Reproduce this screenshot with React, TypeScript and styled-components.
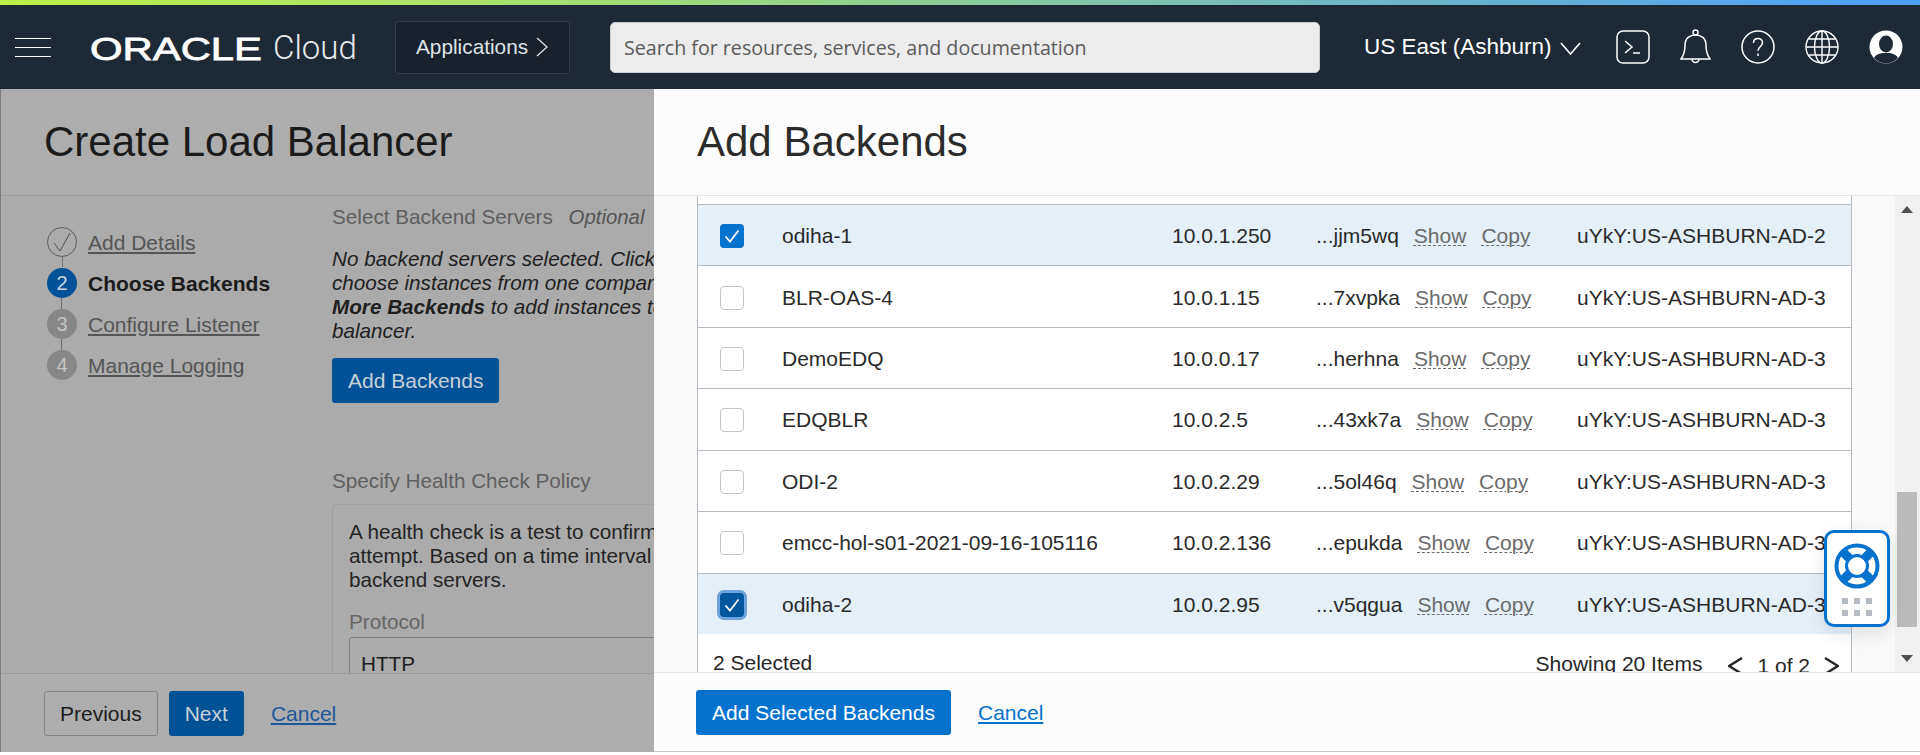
import React from 'react';
import styled, {createGlobalStyle} from 'styled-components';

const GlobalStyle = createGlobalStyle`
  html, body {
    margin: 0;
    padding: 0;
    height: 755px;
    overflow: hidden;
    background: #fff;
    font-family: "Liberation Sans", Arial, sans-serif;
    font-size: 21px;
  }
  * {
    box-sizing: border-box;
  }
`;

const Page = styled.div`
  display: flex;
  flex-direction: column;
  width: 1920px;
  height: 755px;
  overflow: hidden;
`;

const Strip = styled.div`
  height: 5px;
  flex: none;
  background: linear-gradient(90deg, #bdee47 0%, #9edc78 34%, #72bac0 68%, #4c9efc 100%);
`;

const Header = styled.header`
  height: 84px;
  flex: none;
  display: flex;
  align-items: center;
  padding-left: 15px;
  background: #1e2936;
  color: #fff;
`;

const Burger = styled.div`
  width: 36px;
  height: 19px;
  flex: none;
  margin-top: 1px;
  border-top: 1px solid #fff;
  border-bottom: 1px solid #fff;
  display: flex;
  align-items: center;
  &::before {
    content: '';
    width: 100%;
    height: 1px;
    background: #fff;
  }
`;

const Logo = styled.svg`
  width: 172px;
  height: 30px;
  margin-left: 39px;
  flex: none;
`;

const Cloud = styled.span`
  margin-left: 11px;
  width: 99px;
  flex: none;
  font-family: Roboto, "Liberation Sans", sans-serif;
  font-weight: 300;
  font-size: 33px;
  color: #e8eaec;
`;

const AppsButton = styled.div`
  width: 175px;
  height: 53px;
  flex: none;
  margin-left: 23px;
  padding-left: 20px;
  display: flex;
  align-items: center;
  gap: 8px;
  background: #19212c;
  border: 1px solid #333c48;
  border-radius: 3px;
  color: #dfe3e8;
  font-size: 20.8px;
`;

const Search = styled.div`
  width: 710px;
  height: 51px;
  flex: none;
  margin-left: 40px;
  padding-left: 13px;
  display: flex;
  align-items: center;
  background: #ececec;
  border-radius: 5px;
  border: 1px solid #c9ccd0;
  color: #5b5b5b;
  font-family: "Open Sans", sans-serif;
  font-size: 19.65px;
`;

const Region = styled.div`
  margin-left: 44px;
  display: flex;
  align-items: center;
  gap: 8px;
  width: 217px;
  flex: none;
  font-size: 22.5px;
  white-space: nowrap;
  & > svg {
    flex: none;
    margin-top: 2px;
  }
`;

const HeaderIcons = styled.div`
  display: flex;
  align-items: center;
  margin-left: 35px;
  gap: 30px;
`;

const Main = styled.div`
  flex: 1;
  display: flex;
  min-height: 0;
`;

const LeftPanel = styled.section`
  width: 654px;
  flex: none;
  display: flex;
  flex-direction: column;
  overflow: hidden;
  background: #ababab;
  border-left: 1px solid #7d7d7d;
  height: 663px;
`;

const Drawer = styled.section`
  flex: 1;
  display: flex;
  flex-direction: column;
  min-width: 0;
  background: #fcfcfc;
  height: 663px;
  border-bottom: 1px solid #c5c9ce;
  position: relative;
`;

const TitleBar = styled.div<{$dim?: boolean}>`
  height: 107px;
  flex: none;
  display: flex;
  align-items: center;
  padding-left: 43px;
  font-size: 42px;
  color: ${p => (p.$dim ? '#1b1b1b' : '#2b2b2b')};
  background: ${p => (p.$dim ? '#adadad' : '#fcfcfc')};
  border-bottom: 1px solid ${p => (p.$dim ? '#9c9c9c' : '#e5e5e5')};
`;

const LeftBody = styled.div`
  flex: 1;
  min-height: 0;
  display: flex;
  overflow: hidden;
`;

const StepList = styled.ol`
  width: 331px;
  flex: none;
  margin: 0;
  padding: 31px 0 0 46px;
  list-style: none;
  display: flex;
  flex-direction: column;
  gap: 11px;
`;

const Step = styled.li`
  display: flex;
  align-items: center;
  gap: 11px;
  height: 30px;
`;

const StepCircle = styled.span<{$kind: 'done' | 'active' | 'todo'; $last?: boolean}>`
  position: relative;
  width: 30px;
  height: 30px;
  flex: none;
  border-radius: 50%;
  display: flex;
  align-items: center;
  justify-content: center;
  font-size: 20px;
  color: ${p => (p.$kind === 'active' ? '#c9d5e0' : '#c4c4c4')};
  background: ${p => (p.$kind === 'active' ? '#005195' : p.$kind === 'todo' ? '#878787' : 'transparent')};
  border: ${p => (p.$kind === 'done' ? '1px solid #5c5c5c' : 'none')};
  &::after {
    content: '';
    display: ${p => (p.$last ? 'none' : 'block')};
    position: absolute;
    left: 14px;
    top: 100%;
    width: 1px;
    height: 11px;
    background: #6f6f6f;
  }
`;

const StepLink = styled.a`
  padding-top: 1px;
  color: #555;
  text-decoration: underline;
`;

const StepCurrent = styled.span`
  padding-top: 1px;
  color: #1b1b1b;
  font-weight: 700;
`;

const Form = styled.div`
  width: 1200px;
  flex: none;
  padding-top: 9px;
  line-height: 24px;
  font-size: 20.7px;
`;

const SectionLabel = styled.div`
  color: #5f5f5f;
  white-space: nowrap;
`;

const OptionalMark = styled.em`
  margin-left: 10px;
  color: #555;
  font-size: 20.4px;
`;

const HintText = styled.p`
  margin: 18px 0 15px;
  font-style: italic;
  color: #1f1f1f;
  white-space: pre-line;
`;

const Button = styled.button<{$tone: 'dim' | 'bright' | 'outline'}>`
  height: 45px;
  padding: 0 ${p => (p.$tone === 'outline' ? '15px' : '16px')};
  display: inline-flex;
  align-items: center;
  font: inherit;
  font-size: 21px;
  border-radius: 3px;
  border: ${p => (p.$tone === 'outline' ? '1px solid #838383' : 'none')};
  background: ${p => (p.$tone === 'dim' ? '#005195' : p.$tone === 'bright' ? '#0572ce' : 'transparent')};
  color: ${p => (p.$tone === 'dim' ? '#c7d1da' : p.$tone === 'bright' ? '#fff' : '#1d1d1d')};
`;

const HealthHeading = styled(SectionLabel)`
  margin-top: 66px;
`;

const HealthBox = styled.div`
  margin-top: 11px;
  height: 300px;
  padding: 15px 16px;
  border: 1px solid #a0a0a0;
  border-radius: 4px;
  color: #242424;
  white-space: pre-line;
`;

const FieldLabel = styled.div`
  margin-top: 18px;
  color: #666;
`;

const SelectBox = styled.div`
  margin-top: 3px;
  height: 60px;
  padding: 14px 11px;
  border: 1px solid #7f7f7f;
  border-radius: 3px;
  color: #1c1c1c;
`;

const FooterBar = styled.div<{$dim?: boolean}>`
  height: 79px;
  flex: none;
  display: flex;
  align-items: flex-start;
  gap: 11px;
  padding: 17px 0 0 ${p => (p.$dim ? '43px' : '42px')};
  background: ${p => (p.$dim ? '#adadad' : '#fcfcfc')};
  border-top: 1px solid ${p => (p.$dim ? '#9a9a9a' : '#e5e5e5')};
`;

const CancelLink = styled.a<{$dim?: boolean}>`
  height: 45px;
  margin-left: 16px;
  display: flex;
  align-items: center;
  text-decoration: underline;
  color: ${p => (p.$dim ? '#1d5797' : '#0572ce')};
`;

const DrawerBody = styled.div`
  flex: 1;
  min-height: 0;
  display: flex;
  background: #f9f9f9;
`;

const TableArea = styled.div`
  flex: 1;
  padding: 0 43px;
  min-width: 0;
  overflow: hidden;
`;

const Table = styled.div`
  background: #fff;
  height: 100%;
  padding-top: 8px;
  border-left: 1px solid #b5bcc4;
  border-right: 1px solid #b5bcc4;
`;

const Row = styled.div<{$selected?: boolean}>`
  height: 61.43px;
  padding-top: 2px;
  display: grid;
  grid-template-columns: 84px 390px 144px 261px 1fr;
  align-items: center;
  white-space: nowrap;
  color: #2a2a2a;
  background: ${p => (p.$selected ? '#e4eff8' : '#fff')};
  border-top: 1px solid #b5bcc4;
  &:last-of-type {
    border-bottom: 1px solid #b5bcc4;
  }
`;

const Check = styled.span<{$checked?: boolean; $focused?: boolean}>`
  width: 24px;
  height: 24px;
  margin-left: 22px;
  display: flex;
  align-items: center;
  justify-content: center;
  border-radius: 4px;
  border: ${p => (p.$checked ? 'none' : '1px solid #c2c6cb')};
  background: ${p => (p.$focused ? '#00569f' : p.$checked ? '#0572ce' : '#fff')};
  box-shadow: ${p => (p.$focused ? '0 0 0 3px #6ea3dc' : 'none')};
`;

const HashCell = styled.span`
  display: flex;
  gap: 15px;
`;

const DashedLink = styled.a`
  color: #6b6b6b;
  text-decoration: underline dashed 1px;
  text-underline-offset: 2px;
`;

const TableFoot = styled.div`
  display: flex;
  justify-content: space-between;
  padding: 17px 12px 0 15px;
  color: #262626;
  line-height: 24px;
  white-space: nowrap;
`;

const Pager = styled.div`
  display: flex;
  align-items: center;
  gap: 12px;
`;

const PagerCount = styled.span`
  margin: 3px 0 0 14px;
  display: flex;
  align-items: center;
  gap: 14px;
`;

const Scrollbar = styled.div`
  width: 25px;
  flex: none;
  padding: 0 3px 0 2px;
  display: flex;
  flex-direction: column;
  align-items: center;
  background: #f1f1f1;
`;

const ScrollArrow = styled.div<{$up?: boolean}>`
  width: 0;
  height: 0;
  flex: none;
  margin-top: ${p => (p.$up ? '10px' : '28px')};
  border-left: 6px solid transparent;
  border-right: 6px solid transparent;
  ${p => (p.$up ? 'border-bottom: 7px solid #505050;' : 'border-top: 7px solid #505050;')}
`;

const ScrollThumb = styled.div`
  width: 20px;
  height: 135px;
  flex: none;
  margin-top: 279px;
  background: #bbb;
`;

const HelpWidget = styled.div`
  position: absolute;
  left: 1170px;
  top: 441px;
  width: 66px;
  height: 97px;
  padding-top: 10px;
  display: flex;
  flex-direction: column;
  align-items: center;
  gap: 9px;
  background: #fff;
  border: 3px solid #0572ce;
  border-radius: 10px;
  box-shadow: 0 6px 18px rgba(0, 0, 0, 0.1);
`;

const DotGrid = styled.div`
  display: grid;
  grid-template-columns: repeat(3, 6px);
  gap: 6px;
`;

const Dot = styled.span`
  height: 6px;
  background: #b5bcc4;
`;

type ChevronProps = {dir: 'left' | 'right' | 'down'; w: number; h: number; color?: string; sw?: number};

const Chevron = ({dir, w, h, color = '#fff', sw = 1.6}: ChevronProps) => {
  const d =
    dir === 'left'
      ? `M${w - 1} 1 1 ${h / 2}l${w - 2} ${h / 2 - 1}`
      : dir === 'right'
        ? `M1 1l${w - 2} ${h / 2 - 1}L1 ${h - 1}`
        : `M1 1l${w / 2 - 1} ${h - 2}L${w - 1} 1`;
  return (
    <svg width={w} height={h} viewBox={`0 0 ${w} ${h}`} fill="none" stroke={color} strokeWidth={sw}>
      <path d={d} />
    </svg>
  );
};

const TerminalIcon = () => (
  <svg width="34" height="34" viewBox="0 0 34 34" fill="none" stroke="#fff" strokeWidth="1.5">
    <rect x="1" y="1" width="32" height="32" rx="6" />
    <path d="M9 11l7 6-7 6M17 23h7" />
  </svg>
);

const BellIcon = () => (
  <svg width="31" height="36" viewBox="0 0 31 36" fill="none" stroke="#fff" strokeWidth="1.5">
    <circle cx="15.500" cy="3.500" r="2.500" />
    <path d="M1 30c3-4 4-8 4-14 0-7 5-10 10.500-10S26 9 26 16c0 6 1 10 4 14z" />
    <path d="M12 30a3.500 3.500 0 0 0 7 0" />
  </svg>
);

const HelpIcon = () => (
  <svg width="34" height="34" viewBox="0 0 34 34" fill="none" stroke="#fff" strokeWidth="1.5">
    <circle cx="17" cy="17" r="16" />
    <path d="M12.500 13c0-3 2-4.500 4.500-4.500s4.500 1.700 4.500 4.300c0 3.700-4.500 3.700-4.500 8" />
    <path d="M17 23.500v2.500" />
  </svg>
);

const GlobeIcon = () => (
  <svg width="34" height="34" viewBox="0 0 34 34" fill="none" stroke="#fff" strokeWidth="1.4">
    <circle cx="17" cy="17" r="16" />
    <ellipse cx="17" cy="17" rx="7.500" ry="16" />
    <path d="M17 1v32M1 17h32M3.500 9h27M3.500 25h27" />
  </svg>
);

const UserIcon = () => (
  <svg width="34" height="34" viewBox="0 0 34 34">
    <circle cx="17" cy="17" r="16.500" fill="#fff" />
    <ellipse cx="17" cy="14" rx="7" ry="8.500" fill="#1e2936" />
    <path d="M5 28c3-5 8-5 12-5s9 0 12 5a16 16 0 0 1-24 0z" fill="#1e2936" />
  </svg>
);

const CheckMark = () => (
  <svg width="18" height="18" viewBox="0 0 18 18" fill="none" stroke="#fff" strokeWidth="1.8">
    <path d="M2.500 9.500l4.500 5L15.500 3.500" />
  </svg>
);

const LifeRing = () => (
  <svg width="46" height="46" viewBox="0 0 46 46">
    <circle cx="23" cy="23" r="20.500" fill="none" stroke="#0572ce" strokeWidth="4" />
    <circle cx="23" cy="23" r="10.500" fill="none" stroke="#0572ce" strokeWidth="3" />
    <g stroke="#0572ce" strokeWidth="9">
      <path d="M8.500 8.500l8 8M37.500 8.500l-8 8M8.500 37.500l8-8M37.500 37.500l-8-8" />
    </g>
  </svg>
);

const steps = [
  {n: '2', label: 'Choose Backends', kind: 'active'},
  {n: '3', label: 'Configure Listener', kind: 'todo'},
  {n: '4', label: 'Manage Logging', kind: 'todo'},
] as const;

const backends = [
  {name: 'odiha-1', ip: '10.0.1.250', hash: '...jjm5wq', zone: 'uYkY:US-ASHBURN-AD-2', selected: true},
  {name: 'BLR-OAS-4', ip: '10.0.1.15', hash: '...7xvpka', zone: 'uYkY:US-ASHBURN-AD-3'},
  {name: 'DemoEDQ', ip: '10.0.0.17', hash: '...herhna', zone: 'uYkY:US-ASHBURN-AD-3'},
  {name: 'EDQBLR', ip: '10.0.2.5', hash: '...43xk7a', zone: 'uYkY:US-ASHBURN-AD-3'},
  {name: 'ODI-2', ip: '10.0.2.29', hash: '...5ol46q', zone: 'uYkY:US-ASHBURN-AD-3'},
  {name: 'emcc-hol-s01-2021-09-16-105116', ip: '10.0.2.136', hash: '...epukda', zone: 'uYkY:US-ASHBURN-AD-3'},
  {name: 'odiha-2', ip: '10.0.2.95', hash: '...v5qgua', zone: 'uYkY:US-ASHBURN-AD-3', selected: true, focused: true},
];

export default function App() {
  return (
    <Page>
      <GlobalStyle />
      <Strip />
      <Header>
        <Burger />
        <Logo viewBox="0 0 172 30">
          <text
            x="0"
            y="28"
            fontFamily="Liberation Sans"
            fontSize="32"
            fill="#fff"
            stroke="#fff"
            strokeWidth="0.8"
            textLength="172"
            lengthAdjust="spacingAndGlyphs"
          >
            ORACLE
          </text>
        </Logo>
        <Cloud>Cloud</Cloud>
        <AppsButton>
          Applications <Chevron dir="right" w={12} h={20} color="#dfe3e8" sw={1.3} />
        </AppsButton>
        <Search>Search for resources, services, and documentation</Search>
        <Region>
          US East (Ashburn) <Chevron dir="down" w={21} h={13} sw={1.6} />
        </Region>
        <HeaderIcons>
          <TerminalIcon />
          <BellIcon />
          <HelpIcon />
          <GlobeIcon />
          <UserIcon />
        </HeaderIcons>
      </Header>
      <Main>
        <LeftPanel>
          <TitleBar $dim>Create Load Balancer</TitleBar>
          <LeftBody>
            <StepList>
              <Step>
                <StepCircle $kind="done">
                  <svg width="20" height="22" viewBox="0 0 20 22" fill="none" stroke="#4e4e4e" strokeWidth="1">
                    <path d="M2 12l6 8L18 2" />
                  </svg>
                </StepCircle>
                <StepLink>Add Details</StepLink>
              </Step>
              {steps.map((s, i) => (
                <Step key={s.n}>
                  <StepCircle $kind={s.kind} $last={i === steps.length - 1}>
                    {s.n}
                  </StepCircle>
                  {s.kind === 'active' ? <StepCurrent>{s.label}</StepCurrent> : <StepLink>{s.label}</StepLink>}
                </Step>
              ))}
            </StepList>
            <Form>
              <SectionLabel>
                Select Backend Servers <OptionalMark>Optional</OptionalMark>
              </SectionLabel>
              <HintText>
                No backend servers selected. Click Add Backends to{'\n'}
                choose instances from one compartment. Click Add{'\n'}
                <b>More Backends</b> to add instances to your load{'\n'}
                balancer.
              </HintText>
              <Button $tone="dim">Add Backends</Button>
              <HealthHeading>Specify Health Check Policy</HealthHeading>
              <HealthBox>
                A health check is a test to confirm the availability of backend servers. A health check can be a request or a connection{'\n'}
                attempt. Based on a time interval you specify, the load balancer applies the health check policy to continuously monitor{'\n'}
                backend servers.
                <FieldLabel>Protocol</FieldLabel>
                <SelectBox>HTTP</SelectBox>
              </HealthBox>
            </Form>
          </LeftBody>
          <FooterBar $dim>
            <Button $tone="outline">Previous</Button>
            <Button $tone="dim">Next</Button>
            <CancelLink $dim>Cancel</CancelLink>
          </FooterBar>
        </LeftPanel>
        <Drawer>
          <TitleBar>Add Backends</TitleBar>
          <DrawerBody>
            <TableArea>
              <Table>
                {backends.map(b => (
                  <Row key={b.name} $selected={b.selected}>
                    <Check $checked={b.selected} $focused={b.focused}>
                      {b.selected && <CheckMark />}
                    </Check>
                    <span>{b.name}</span>
                    <span>{b.ip}</span>
                    <HashCell>
                      {b.hash}
                      <DashedLink>Show</DashedLink>
                      <DashedLink>Copy</DashedLink>
                    </HashCell>
                    <span>{b.zone}</span>
                  </Row>
                ))}
                <TableFoot>
                  <span>2 Selected</span>
                  <Pager>
                    <span>Showing 20 Items</span>
                    <PagerCount>
                      <Chevron dir="left" w={15} h={18} color="#262626" sw={2.4} />
                      1 of 2
                      <Chevron dir="right" w={15} h={18} color="#262626" sw={2.4} />
                    </PagerCount>
                  </Pager>
                </TableFoot>
              </Table>
            </TableArea>
            <Scrollbar>
              <ScrollArrow $up />
              <ScrollThumb />
              <ScrollArrow />
            </Scrollbar>
          </DrawerBody>
          <FooterBar>
            <Button $tone="bright">Add Selected Backends</Button>
            <CancelLink>Cancel</CancelLink>
          </FooterBar>
          <HelpWidget>
            <LifeRing />
            <DotGrid>
              {Array.from({length: 6}, (_, i) => (
                <Dot key={i} />
              ))}
            </DotGrid>
          </HelpWidget>
        </Drawer>
      </Main>
    </Page>
  );
}
